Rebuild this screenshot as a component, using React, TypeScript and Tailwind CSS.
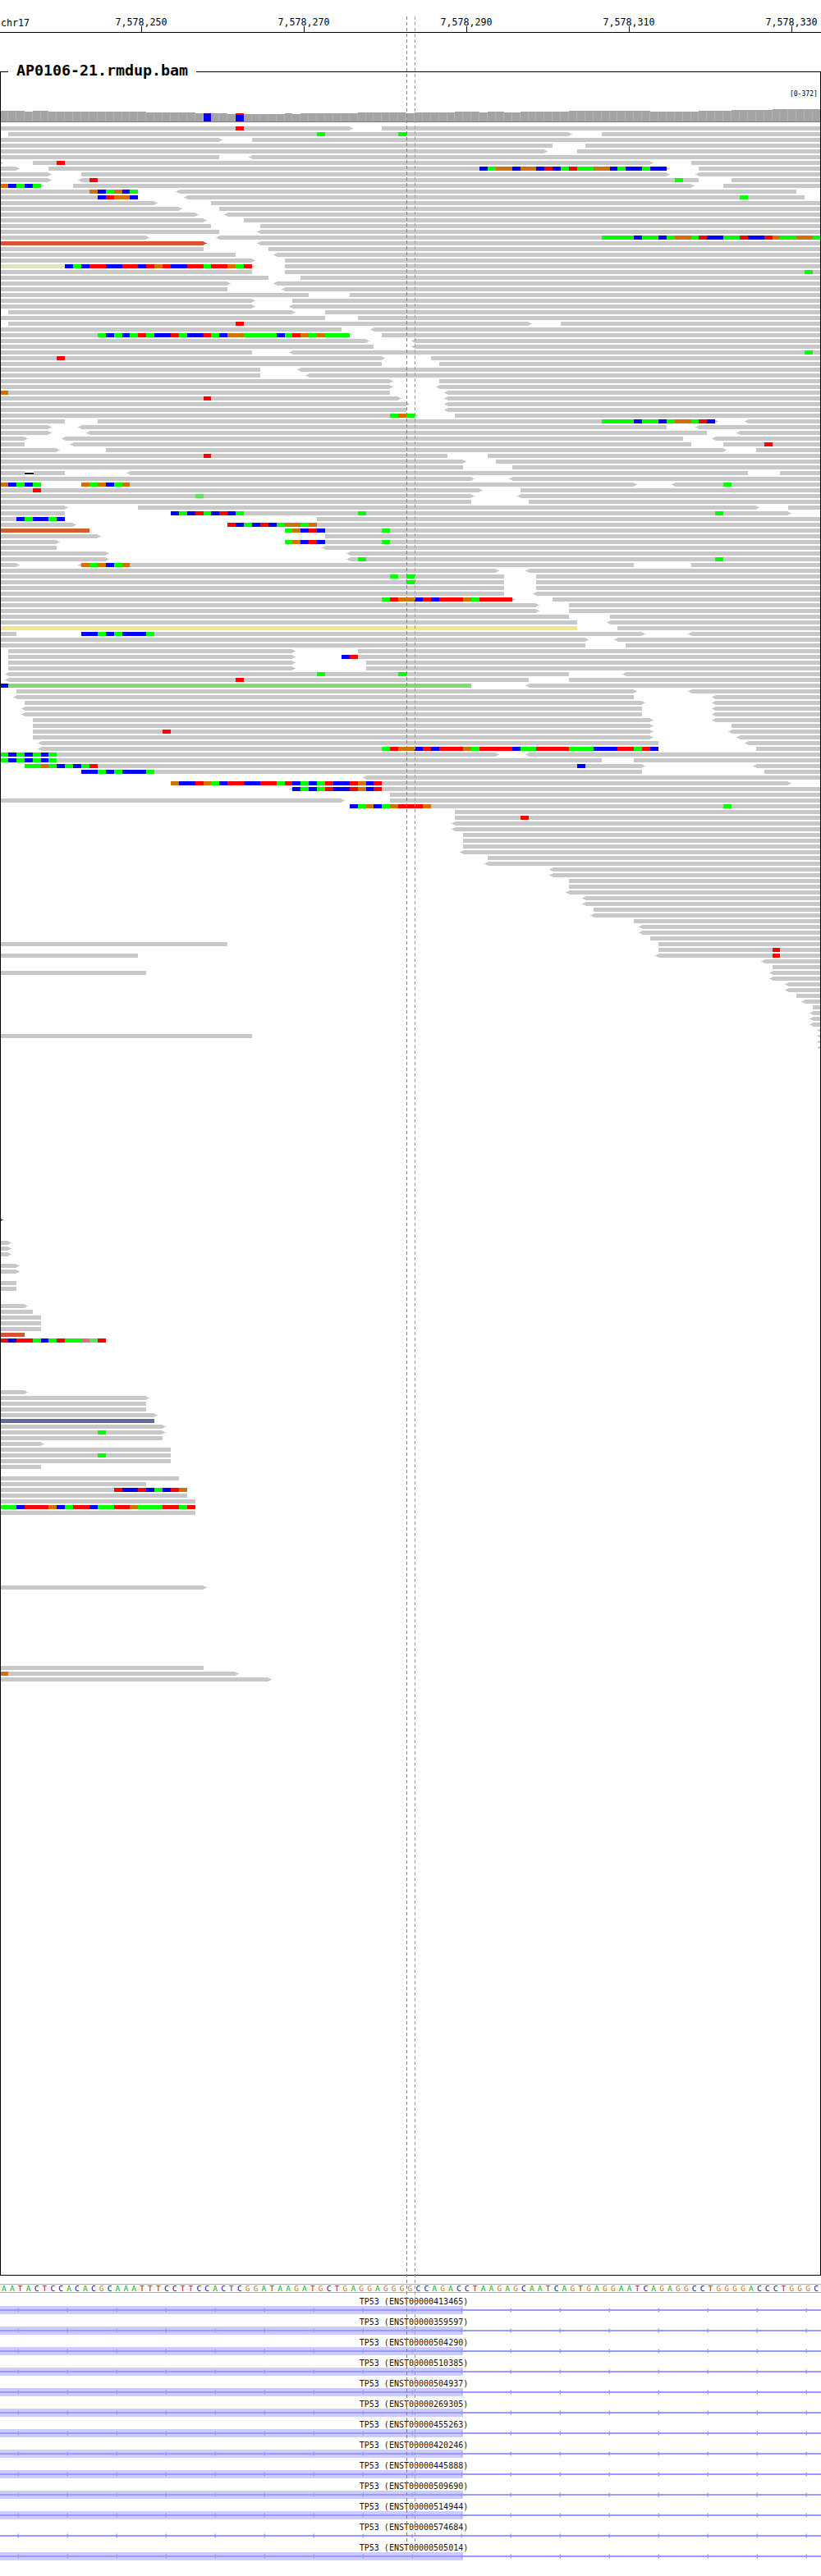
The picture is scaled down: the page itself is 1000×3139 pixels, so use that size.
import React from "react";

const ROWS: string[] = [
  "0-426> 465-1000 r287",
  "10-693> 733-1000 g386 g485",
  "0-267> 307-1000",
  "0-673 713-1000",
  "0-663> 703-1000",
  "0-267 <307-1000",
  "0-0> 40-792> 842-1000 r69",
  "0-20> 59-812> 851-1000 b584:bgooboobrbgrggoobgbbgbb",
  "0-59> 99-812> <851-1000",
  "0-59> <99-851 891-1000 r109 g822",
  "0-50> 89-842> 881-1000 o0:obgbg",
  "0-168 <218-970 o109:obgobg",
  "0-168 <228-980 b119:broob g901",
  "0-188> 257-1000",
  "0-218> 267-1000",
  "0-238> <277-1000",
  "0-248> 297-1000",
  "0-257 317-1000",
  "0-267 <317-1000",
  "0-178> <267-1000 g733:ggggbggbgoogrbbggrbbroggoog",
  "#d9513b:0-248> <317-1000",
  "0-248 327-1000",
  "0-287 <337-1000",
  "0-307> 347-1000",
  "#dde5c0:0-307> 347-1000 b79:bgbrrbbrrbrorbbrrgrrogr",
  "0-307 347-1000 g980",
  "0-327 366-1000",
  "0-277> <337-1000",
  "0-277 <347-1000",
  "0-376 426-1000",
  "0-307> 356-1000",
  "0-307> <356-1000",
  "10-356> 396-1000",
  "0-396 436-1000",
  "10-644> 683-1000 r287",
  "0-416 <455-1000",
  "0-426 465-1000 g119:gbgbgrgbbrgbbrgboogggg" + "bgrogoggg",
  "0-446> <503-1000",
  "0-455 <503-1000",
  "0-307 <356-1000 g980",
  "0-465> 525-1000 r69",
  "0-465 535-1000",
  "0-317 <366-1000",
  "0-317 <376-1000",
  "0-475> 535-1000",
  "0-475> <535-1000",
  "0-475 <545-1000 o0:o",
  "0-485> <545-1000 r248",
  "0-495> <545-1000",
  "0-495 <545-1000",
  "0-505> 554-1000 g475:gog",
  "0-79 119-871> <911-1000 g733:ggggbggbgoogrb",
  "0-59> <99-812 <851-1000",
  "0-59> <109-861 <901-1000",
  "0-30> <79-832 <871-1000",
  "0-30 <89-842 881-1000 r931",
  "0-69> 129-881> 921-1000",
  "0-545 594-1000 r248",
  "0-564> 604-1000",
  "0-564 624-1000",
  "0-79 <158-911 950-1000 d30-41",
  "0-574> <622-1000",
  "0-50 99-772> <822-1000 o0:obgbg o99:ogobgo g881",
  "0-584> 634-1000 r40",
  "0-574> <634-1000 l238",
  "0-574 644-1000",
  "0-79> 168-921> 960-1000",
  "0-79 208-960> b208:bgbrgbrbg g436 g871",
  "0-79 386-1000 b20:bgbbgb",
  "0-89> 277-1000 r277:rbgbrbgoogo",
  "#cf6029:0-109 347-1000 g347:gobrb g465",
  "0-119> 396-1000",
  "0-69> 347-1000 g347:gobrb g465",
  "0-69 <396-1000",
  "0-129> <426-1000",
  "0-129> <426-1000 g436 g871",
  "0-20> <99-772 842-1000 o99:ogobgo",
  "0-604> <644-1000",
  "0-614 653-1000 g475 g495",
  "0-614 653-1000 g495",
  "0-614 653-1000",
  "0-614 <653-1000",
  "0-624> 673-1000 g465:groobrbrrrogrrrr",
  "0-654> 693-1000",
  "0-654> 693-1000",
  "0-693 743-1000",
  "0-703 <743-1000",
  "#f0e68c:0-703 752-1000",
  "0-20 99-782> <842-1000 b99:bbgbgbbbg",
  "0-713> <752-1000",
  "0-713 762-1000",
  "10-356> 436-1000",
  "10-356> 436-1000 b416:br",
  "10-356> 446-1000",
  "10-356> 446-1000",
  "<10-693 <762-1000 g386 g485",
  "<10-644 693-1000 r287",
  "#7fdd70:10-574 <644-1000 b0:b",
  "20-772> <842-1000",
  "<20-772 <871-1000",
  "30-782> <871-1000",
  "<30-782 <871-1000",
  "<30-782 <871-1000",
  "40-792> <871-1000",
  "40-792> 891-1000",
  "40-792> <891-1000 r198",
  "40-792> <901-1000",
  "<50-802 <911-1000",
  "<50-802 921-1000 g465:groobrbrrrogrrrrbggrrrrgggbbbrrgrb",
  "0-604> <644-1000 g0:gbgbgbg",
  "0-733 772-1000 g0:gbgbgbg",
  "30-782> <921-1000 g30:ggogbgbgr b703",
  "99-782 931-1000 b99:bbgbgbbbg",
  "<446-1000",
  "208-960> o208:obbrogbrrbbrrgrbgbgrbbrobr",
  "<356-1000 b356:bgbgrbbrobr",
  "475-1000",
  "0-416> 475-1000",
  "426-1000 b426:bgobgorrro g881",
  "554-1000",
  "554-1000 r634",
  "<554-1000",
  "<554-1000",
  "564-1000",
  "564-1000",
  "564-1000",
  "<564-1000",
  "594-1000",
  "<594-1000",
  "<673-1000",
  "<673-1000",
  "693-1000",
  "693-1000",
  "<693-1000",
  "<713-1000",
  "<713-1000",
  "723-1000",
  "<723-1000",
  "772-1000",
  "<782-1000",
  "<782-1000",
  "792-1000",
  "0-277 802-1000",
  "802-1000 r941",
  "0-168 <802-1000 r941",
  "<931-1000",
  "941-1000",
  "0-178 <941-1000",
  "<941-1000",
  "<960-1000",
  "<960-1000",
  "970-1000",
  "<980-1000",
  "990-1000",
  "<990-1000",
  "<990-1000",
  "<990-1000",
  "<999-1000",
  "0-306 <999-1000",
  "<999-1000",
  "<999-1000",
];

const SPARSE: Record<number, string> = {
  190: "#4a5a78:0-0>",
  194: "0-10>",
  195: "0-10>",
  196: "0-10>",
  198: "0-20>",
  199: "0-20>",
  201: "0-20",
  202: "0-20",
  205: "0-30>",
  206: "0-40",
  207: "0-50",
  208: "0-50",
  209: "0-50",
  210: "#d9513b:0-30",
  211: "r0:rbrrgbgrggplr",
  220: "0-30>",
  221: "0-178>",
  222: "0-178",
  223: "0-178",
  224: "0-188>",
  225: "#646a9f:0-188",
  226: "0-198>",
  227: "0-198> g119",
  228: "0-198",
  229: "0-50>",
  230: "0-208",
  231: "0-208 g119",
  232: "0-208",
  233: "0-50",
  235: "0-218",
  236: "0-178",
  237: "0-218 r139:rbbrbgbro",
  238: "0-228",
  239: "0-238",
  240: "g0:ggbrrrobgrrbggrrogggrrgr",
  241: "0-238",
  254: "0-248>",
  268: "0-248",
  269: "0-287> o0:o",
  270: "0-327>",
};

const BASE: Record<string, string> = {
  g: "#00ff00",
  b: "#0000ff",
  o: "#d17105",
  r: "#ff0000",
  p: "#dc7373",
  l: "#62e062",
};

const cell = (k: number) => Math.round(k * 9.9);
const snap = (x: number) => (x >= 999 ? x : cell(Math.round(x / 9.9)));

function Row({ index, spec }: { index: number; spec: string }) {
  const y = 154 + index * 7;
  const parts: React.ReactNode[] = [];
  spec.split(" ").forEach((t, i) => {
    const read = t.match(/^(#[0-9a-f]{6}:)?(<)?(\d+)-(\d+)(>)?$/);
    if (read) {
      const fill = read[1] ? read[1].slice(0, 7) : "#c8c8c8";
      const x0 = snap(+read[3]);
      const x1 = snap(+read[4]);
      parts.push(<rect key={`r${i}`} x={x0} y={y} width={x1 - x0} height={5} fill={fill} />);
      if (read[2]) {
        parts.push(<rect key={`a${i}`} x={x0 - 2} y={y + 1} width={2} height={3} fill={fill} />);
        parts.push(<rect key={`b${i}`} x={x0 - 4} y={y + 2} width={2} height={1} fill={fill} />);
      }
      if (read[5]) {
        parts.push(<rect key={`c${i}`} x={x1} y={y + 1} width={2} height={3} fill={fill} />);
        parts.push(<rect key={`e${i}`} x={x1 + 2} y={y + 2} width={2} height={1} fill={fill} />);
      }
      return;
    }
    const del = t.match(/^d(\d+)-(\d+)$/);
    if (del) {
      const x0 = +del[1];
      const w = +del[2] - x0;
      parts.push(<rect key={`d${i}`} x={x0} y={y} width={w} height={5} fill="#ffffff" />);
      parts.push(<rect key={`f${i}`} x={x0} y={y + 2} width={w} height={2} fill="#000000" />);
      return;
    }
    const run = t.match(/^[a-z](\d+)(?::([a-z]+))?$/);
    if (run) {
      const k = Math.round(+run[1] / 9.9);
      const letters = run[2] ?? t[0];
      letters.split("").forEach((c, j) => {
        const a = cell(k + j);
        parts.push(
          <rect key={`m${i}-${j}`} x={a} y={y} width={cell(k + j + 1) - a} height={5} fill={BASE[c]} />,
        );
      });
    }
  });
  return <>{parts}</>;
}

const TOPS: [number, number][] = [
  [3, 135], [1, 136], [2, 135], [12, 136], [6, 137], [4, 138], [1, 139], [1, 138],
  [5, 139], [1, 138], [1, 139], [7, 138], [6, 137], [1, 138], [5, 137], [3, 136],
  [1, 137], [2, 136], [2, 137], [6, 136], [10, 135], [6, 136], [4, 135], [5, 134], [6, 133],
];
const tops: number[] = TOPS.flatMap(([n, t]) => Array<number>(n).fill(t));

function Coverage() {
  return (
    <>
      {tops.map((top, k) => {
        const x0 = cell(k);
        const x1 = cell(k + 1);
        const w = x1 - x0;
        if (k === 25 || k === 29) {
          return (
            <g key={k}>
              <rect x={x0} y={top} width={w} height={148 - top} fill="#0000ff" />
              {k === 25 ? (
                <rect x={x0 + 4} y={top} width={1} height={1} fill="#ff0000" />
              ) : (
                <rect x={x0} y={top} width={w} height={2} fill="#ff0000" />
              )}
            </g>
          );
        }
        return (
          <g key={k}>
            <rect x={x0} y={top} width={w} height={148 - top} fill="#a4a4a4" />
            <rect x={x1 - 1} y={top + 1} width={1} height={147 - top} fill="#b4b4b4" />
          </g>
        );
      })}
      <rect x={0} y={148} width={1000} height={1} fill="#7a7a7a" />
    </>
  );
}

const SEQUENCE =
  "AATACTCCACACGCAAATTTCCTTCCACTCGGATAAGATGCTGAGGAGGGGCCAGACCTAAGAGCAATCAGTGAGGAATCAGAGGCCTGGGGACCCTGGGC";

const seqClass: Record<string, string> = {
  A: "w-[9.9px] shrink-0 text-center text-[#00b400]",
  C: "w-[9.9px] shrink-0 text-center text-[#0000c8]",
  G: "w-[9.9px] shrink-0 text-center text-[#d17105]",
  T: "w-[9.9px] shrink-0 text-center text-[#e60000]",
};

const TICKS = ["7,578,250", "7,578,270", "7,578,290", "7,578,310", "7,578,330"];

const TRANSCRIPTS: [string, boolean][] = [
  ["ENST00000413465", true],
  ["ENST00000359597", true],
  ["ENST00000504290", true],
  ["ENST00000510385", true],
  ["ENST00000504937", true],
  ["ENST00000269305", true],
  ["ENST00000455263", true],
  ["ENST00000420246", true],
  ["ENST00000445888", true],
  ["ENST00000509690", true],
  ["ENST00000514944", true],
  ["ENST00000574684", false],
  ["ENST00000505014", true],
];

const ARROWS = Array.from({ length: 17 }, (_, i) => 20 + i * 60);

function GeneTrack({ exon }: { exon: boolean }) {
  return (
    <svg width={1000} height={10} viewBox="0 0 1000 10" className="block shrink-0">
      {exon && <rect x={0} y={0} width={564} height={10} fill="#ccccff" />}
      <rect x={0} y={4} width={1000} height={2} fill="#9999ff" />
      {ARROWS.map((x) => (
        <path key={x} d={`M${x} 5 L${x + 3} 2 L${x + 3} 8 Z`} fill="#9999ff" />
      ))}
    </svg>
  );
}

export default function App() {
  return (
    <div className="relative w-[1000px] h-[3139px] overflow-hidden bg-white text-black font-['DejaVu_Sans_Mono',monospace]">
      {/* Ruler */}
      <div className="flex h-[40px] items-end border-b border-black">
        <div className="w-[73px] shrink-0 pb-[7px] pl-[1px] text-[11.6px] leading-[8px]">chr17</div>
        {TICKS.map((t) => (
          <div key={t} className="flex w-[198px] shrink-0 flex-col items-center">
            <span className="mb-[1px] text-[11.6px] leading-[8px]">{t}</span>
            <span className="h-[7px] w-px bg-black" />
          </div>
        ))}
      </div>

      {/* Alignment track */}
      <div className="relative mt-[47px] h-[2686px] border border-black">
        <div className="absolute left-[9px] top-[-14px] bg-white px-[10px] text-[18.3px] font-bold leading-[24px]">
          AP0106-21.rmdup.bam
        </div>
        <div className="flex h-[45px] justify-end pr-[3px] pt-[21px] text-[8.1px] leading-[10px]">[0-372]</div>
        <svg width={998} height={2639} viewBox="1 133 998 2639" className="block">
          <Coverage />
          {ROWS.map((spec, i) => (
            <Row key={i} index={i} spec={spec} />
          ))}
          {Object.entries(SPARSE).map(([i, spec]) => (
            <Row key={i} index={+i} spec={spec} />
          ))}
        </svg>
      </div>

      {/* Reference sequence */}
      <div className="mt-[10px] flex h-[11px] items-center border-y border-[#b0b0b0] text-[9.5px] leading-[9px]">
        {SEQUENCE.split("").map((c, i) => (
          <span key={i} className={seqClass[c]}>
            {c}
          </span>
        ))}
      </div>

      {/* Gene tracks */}
      <div className="mt-[5px] flex flex-col">
        {TRANSCRIPTS.map(([id, exon]) => (
          <div key={id} className="flex h-[25px] flex-col items-center">
            <div className="h-[11px] pl-[8px] text-[10px] leading-[12px] text-[#111111]">{`TP53 (${id})`}</div>
            <GeneTrack exon={exon} />
          </div>
        ))}
      </div>

      {/* Center guide lines */}
      <svg width={1000} height={3078} viewBox="0 20 1000 3078" className="pointer-events-none absolute left-0 top-[20px]">
        <line x1={495.5} y1={20} x2={495.5} y2={3098} stroke="#808080" strokeDasharray="4 3" />
        <line x1={505.5} y1={20} x2={505.5} y2={3098} stroke="#a0a0a0" strokeDasharray="4 3" />
      </svg>
    </div>
  );
}
